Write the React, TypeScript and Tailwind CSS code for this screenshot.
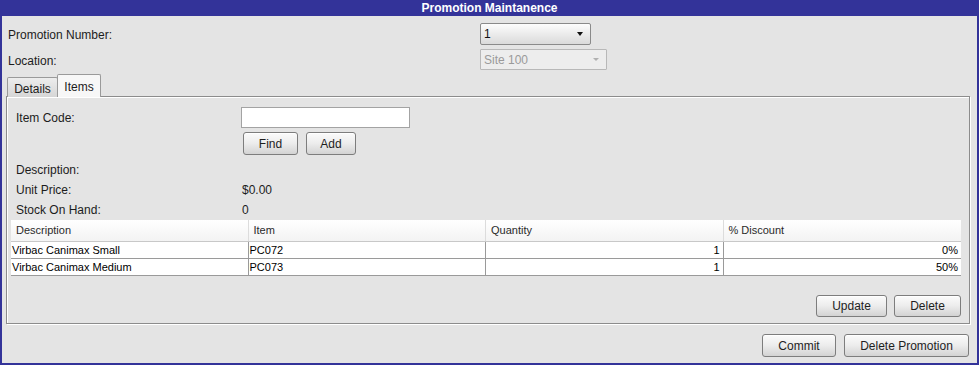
import type { ReactNode } from "react";

const items = [
  { description: "Virbac Canimax Small", item: "PC072", quantity: 1, discount: "0%" },
  { description: "Virbac Canimax Medium", item: "PC073", quantity: 1, discount: "50%" },
];

function Button({ children, className = "" }: { children: ReactNode; className?: string }) {
  return (
    <button
      className={`flex items-center justify-center rounded-[3px] border border-[#7d7d7d] bg-gradient-to-b from-[#fbfbfb] via-[#ececec] to-[#d3d3d3] text-[12px] text-[#1e1e1e] shadow-[inset_0_1px_0_#fff] ${className}`}
    >
      {children}
    </button>
  );
}

function Label({ children }: { children: ReactNode }) {
  return <span className="text-[12px] text-[#1c1c1c]">{children}</span>;
}

export default function App() {
  return (
    <div
      className="flex h-[365px] w-[979px] flex-col bg-[#e4e4e4] border-x-2 border-b-2 border-[#333399]"
      style={{ fontFamily: '"Liberation Sans", Arial, sans-serif' }}
    >
      {/* Title bar */}
      <div className="-mx-[2px] flex h-[16px] items-center justify-center bg-[#333399] text-[12px] font-bold leading-none text-white">
        Promotion Maintanence
      </div>

      {/* Header fields */}
      <div className="mt-[7px] flex h-[22px] items-center">
        <div className="w-[478px] pl-[6px]">
          <Label>Promotion Number:</Label>
        </div>
        <div className="flex h-[22px] w-[111px] items-center justify-between rounded-[2px] border border-[#8a8a8a] bg-gradient-to-b from-[#fdfdfd] to-[#dadada] pl-[3px] pr-[7px]">
          <span className="text-[12px] text-[#111]">1</span>
          <span className="h-0 w-0 border-x-[3.5px] border-t-[4px] border-x-transparent border-t-[#111]" />
        </div>
      </div>
      <div className="mt-[4px] flex h-[21px] items-center">
        <div className="w-[478px] pl-[6px]">
          <Label>Location:</Label>
        </div>
        <div className="flex h-[21px] w-[127px] items-center justify-between rounded-[1px] border border-[#b8b8b8] bg-[#ededed] pl-[3px] pr-[7px]">
          <span className="text-[12px] text-[#9a9a9a]">Site 100</span>
          <span className="h-0 w-0 border-x-[3px] border-t-[3px] border-x-transparent border-t-[#b0b0b0]" />
        </div>
      </div>

      {/* Tabs */}
      <div className="relative z-10 mt-[4px] flex h-[23px] items-end pl-[5px] -mb-[1px]">
        <div className="flex h-[20px] w-[51px] items-center justify-center rounded-t-[2px] border border-b-0 border-[#9a9a9a] bg-gradient-to-b from-[#ededed] to-[#d6d6d6] pt-[2px] text-[12px] text-[#1c1c1c]">
          Details
        </div>
        <div className="-ml-px flex h-[23px] w-[44px] items-start justify-center rounded-t-[2px] border border-b-0 border-[#9a9a9a] bg-[#f7f7f7] pt-[3px] text-[12px] text-[#1c1c1c]">
          Items
        </div>
      </div>

      {/* Tab panel */}
      <div className="ml-[4px] flex h-[228px] w-[964px] flex-col border border-[#8c8c8c] shadow-[inset_1px_1px_0_#fff,1px_1px_0_#fff]">
        <div className="grid grid-cols-[225px_1fr] pl-[9px]">
          <div className="mt-[10px] flex h-[21px] items-center">
            <Label>Item Code:</Label>
          </div>
          <div className="mt-[10px]">
            <div className="h-[21px] w-[169px] border border-[#a3a3a3] bg-white" />
          </div>

          <div />
          <div className="mt-[4px] flex gap-[8px] pl-[2px]">
            <Button className="h-[23px] w-[55px]">Find</Button>
            <Button className="h-[23px] w-[50px]">Add</Button>
          </div>

          <div className="mt-[5px] flex h-[20px] items-center">
            <Label>Description:</Label>
          </div>
          <div className="mt-[5px] h-[20px]" />

          <div className="flex h-[20px] items-center">
            <Label>Unit Price:</Label>
          </div>
          <div className="flex h-[20px] items-center pl-[1px]">
            <Label>$0.00</Label>
          </div>

          <div className="flex h-[20px] items-center">
            <Label>Stock On Hand:</Label>
          </div>
          <div className="flex h-[20px] items-center pl-[1px]">
            <Label>0</Label>
          </div>
        </div>

        {/* Items table */}
        <div className="ml-[4px] w-[950px] text-[11px] text-black">
          <div className="grid h-[22px] grid-cols-4 border-b border-[#c8c8c8] bg-gradient-to-b from-white to-[#f3f3f3] text-[#2a2a2a]">
            {["Description", "Item", "Quantity", "% Discount"].map((h, i) => (
              <div
                key={h}
                className={`flex items-center pl-[5px] ${i < 3 ? "border-r border-[#dcdcdc]" : ""}`}
              >
                {h}
              </div>
            ))}
          </div>
          {items.map((row) => (
            <div key={row.item} className="grid h-[17px] grid-cols-4 border-b border-[#9a9a9a] bg-white">
              <div className="flex items-center border-r border-[#9a9a9a] pl-[1px]">{row.description}</div>
              <div className="flex items-center border-r border-[#9a9a9a] pl-[1px]">{row.item}</div>
              <div className="flex items-center justify-end border-r border-[#9a9a9a] pr-[3px]">{row.quantity}</div>
              <div className="flex items-center justify-end pr-[3px]">{row.discount}</div>
            </div>
          ))}
        </div>

        <div className="mt-auto mb-[6px] flex justify-end gap-[7px] pr-[8px]">
          <Button className="h-[22px] w-[71px]">Update</Button>
          <Button className="h-[22px] w-[67px]">Delete</Button>
        </div>
      </div>

      {/* Bottom actions */}
      <div className="mt-[10px] flex justify-end gap-[8px] pr-[8px]">
        <Button className="h-[23px] w-[74px]">Commit</Button>
        <Button className="h-[23px] w-[125px]">Delete Promotion</Button>
      </div>
    </div>
  );
}
